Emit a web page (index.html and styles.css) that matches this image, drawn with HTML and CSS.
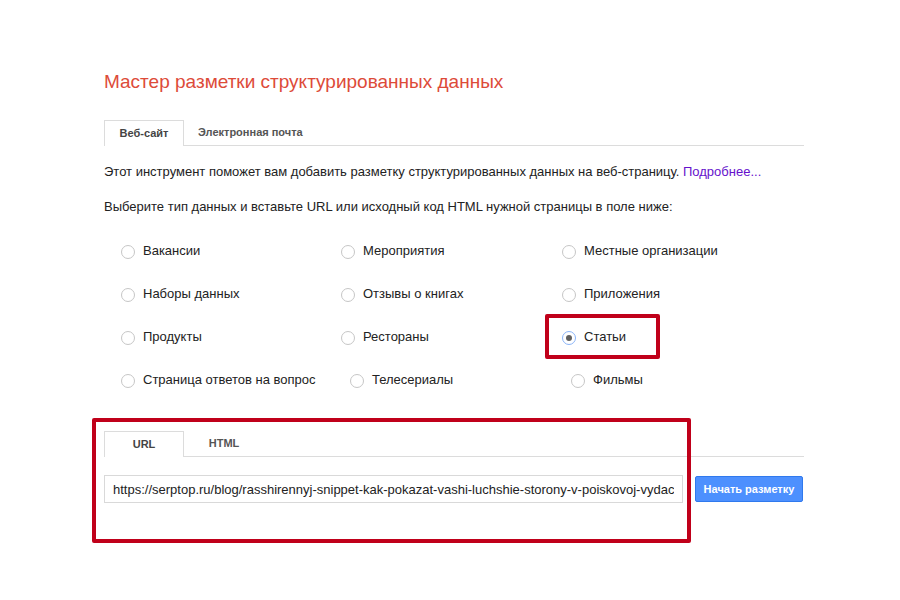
FILE: index.html
```html
<!DOCTYPE html>
<html lang="ru">
<head>
	<meta charset="utf-8">
	<title>Мастер разметки структурированных данных</title>
	<link rel="stylesheet" href="styles.css">
</head>
<body>
	<div class="page">
		<h1 class="title">Мастер разметки структурированных данных</h1>

		<div class="tabs">
			<div class="tab tab-active">Веб-сайт</div>
			<div class="tab">Электронная почта</div>
		</div>

		<p class="intro">Этот инструмент поможет вам добавить разметку структурированных данных на веб-страницу. <a href="#" class="more">Подробнее...</a></p>
		<p class="intro">Выберите тип данных и вставьте URL или исходный код HTML нужной страницы в поле ниже:</p>

		<div class="types">
			<label class="type"><span class="radio"></span>Вакансии</label>
			<label class="type"><span class="radio"></span>Мероприятия</label>
			<label class="type"><span class="radio"></span>Местные организации</label>

			<label class="type"><span class="radio"></span>Наборы данных</label>
			<label class="type"><span class="radio"></span>Отзывы о книгах</label>
			<label class="type"><span class="radio"></span>Приложения</label>

			<label class="type"><span class="radio"></span>Продукты</label>
			<label class="type"><span class="radio"></span>Рестораны</label>
			<label class="type type-marked"><span class="radio radio-checked"></span>Статьи<span class="mark mark-small"></span></label>

			<label class="type"><span class="radio"></span>Страница ответов на вопрос</label>
			<label class="type type-shift"><span class="radio"></span>Телесериалы</label>
			<label class="type type-shift"><span class="radio"></span>Фильмы</label>
		</div>

		<div class="source">
			<span class="mark mark-big"></span>
			<div class="tabs">
				<div class="tab tab-active">URL</div>
				<div class="tab">HTML</div>
			</div>
			<div class="source-row">
				<input class="url" type="text" value="https://serptop.ru/blog/rasshirennyj-snippet-kak-pokazat-vashi-luchshie-storony-v-poiskovoj-vydache/">
				<button class="start">Начать разметку</button>
			</div>
		</div>
	</div>
</body>
</html>
```

FILE: styles.css
```css
body{
	margin: 0;
	background: #fff;
	font-family: "Liberation Sans", Arial, sans-serif;
	font-size: 13px;
	color: #222;
}

.page{
	width: 700px;
	padding: 70px 0 97px 104px;
}

.title{
	margin: 0;
	font-size: 19px;
	line-height: 24px;
	font-weight: normal;
	color: #dd4b39;
}

/* вкладки */
.tabs{
	display: flex;
	height: 25px;
	margin-top: 26px;
	border-bottom: 1px solid #dcdcdc;
}
	.tab{
		min-width: 80px;
		box-sizing: border-box;
		padding: 0 14px;
		line-height: 25px;
		font-size: 11px;
		font-weight: bold;
		color: #555;
		text-align: center;
	}
	.tab-active{
		height: 26px;
		border: 1px solid #dcdcdc;
		border-bottom: 0;
		background: #fff;
		color: #444;
		line-height: 24px;
	}

.intro{
	margin: 17px 0 0 0;
	line-height: 18px;
}
	.more{
		color: #61c;
		text-decoration: none;
	}

/* типы данных */
.types{
	display: grid;
	grid-template-columns: 220px 221px 220px;
	margin-top: 13px;
	padding-left: 17px;
}
	.type{
		display: flex;
		align-items: center;
		height: 43px;
		line-height: 16px;
	}
	.type-shift{
		margin-left: 9px;
	}
	.type-marked{
		position: relative;
	}
	.radio{
		width: 14px;
		height: 14px;
		box-sizing: border-box;
		margin: 2px 8px 0 0;
		border: 1px solid #c6c6c6;
		border-radius: 50%;
		background: #fff;
		flex-shrink: 0;
	}
	.radio-checked{
		border-color: #8ab4f8;
		position: relative;
	}
	.radio-checked::after{
		content: "";
		position: absolute;
		left: 3px;
		top: 3px;
		width: 6px;
		height: 6px;
		border-radius: 50%;
		background: #606060;
	}

/* красные рамки поверх */
.mark{
	position: absolute;
	box-sizing: border-box;
	border: 4px solid #c0001a;
	border-radius: 2px;
	pointer-events: none;
}
.mark-small{
	left: -17px;
	top: -1px;
	width: 115px;
	height: 45px;
}
.mark-big{
	left: -12px;
	top: -13px;
	width: 599px;
	height: 125px;
}

.source{
	position: relative;
	margin-top: 30px;
}
	.source .tabs{
		margin-top: 0;
	}
	.source-row{
		display: flex;
		align-items: center;
		gap: 12px;
		margin-top: 18px;
	}
	.url{
		width: 579px;
		height: 28px;
		box-sizing: border-box;
		margin: 0;
		padding: 0 8px;
		border: 1px solid #d9d9d9;
		font-family: "Liberation Sans", Arial, sans-serif;
		font-size: 13px;
		color: #222;
		outline: none;
	}
	.start{
		width: 108px;
		height: 26px;
		padding: 0;
		border: 1px solid #3079ed;
		border-radius: 2px;
		background: #4d90fe;
		color: #fff;
		font-family: "Liberation Sans", Arial, sans-serif;
		font-size: 11px;
		font-weight: bold;
	}
```
